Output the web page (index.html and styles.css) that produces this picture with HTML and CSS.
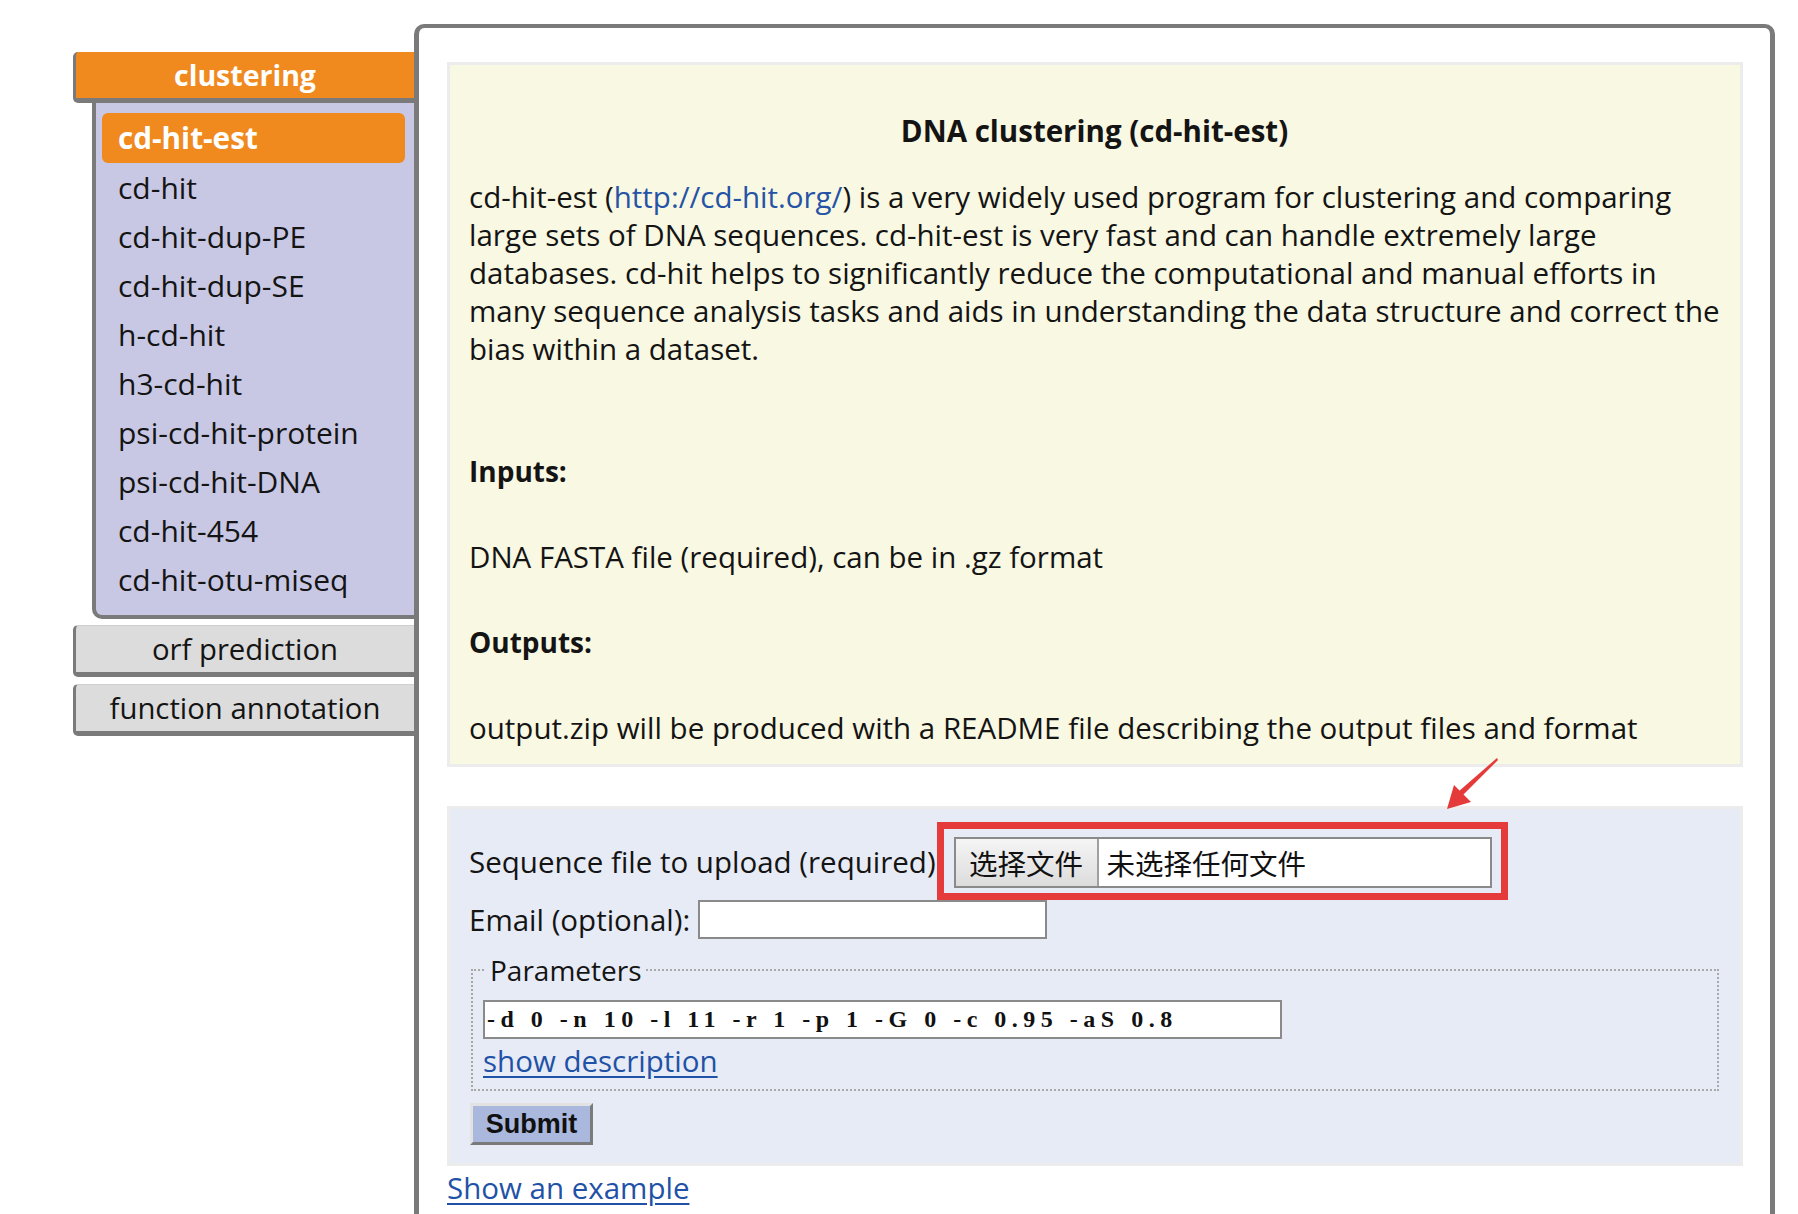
FILE: index.html
```html
<!DOCTYPE html>
<html lang="en">
<head>
<meta charset="utf-8">
<title>CD-HIT Suite: cd-hit-est</title>
<link rel="stylesheet" href="styles.css">
</head>
<body>
<div class="page">
  <nav class="sidebar">
    <div class="cat cat-active">clustering</div>
    <ul class="sub">
      <li class="sel">cd-hit-est</li>
      <li>cd-hit</li>
      <li>cd-hit-dup-PE</li>
      <li>cd-hit-dup-SE</li>
      <li>h-cd-hit</li>
      <li>h3-cd-hit</li>
      <li>psi-cd-hit-protein</li>
      <li>psi-cd-hit-DNA</li>
      <li>cd-hit-454</li>
      <li>cd-hit-otu-miseq</li>
    </ul>
    <div class="cat cat-gap1">orf prediction</div>
    <div class="cat cat-gap2">function annotation</div>
  </nav>

  <main class="panel">
    <section class="info">
      <h2 class="title">DNA clustering (cd-hit-est)</h2>
      <p class="desc">cd-hit-est (<a class="plain-link" href="#">http://cd-hit.org/</a>) is a very widely used program for clustering and comparing<br>large sets of DNA sequences. cd-hit-est is very fast and can handle extremely large<br>databases. cd-hit helps to significantly reduce the computational and manual efforts in<br>many sequence analysis tasks and aids in understanding the data structure and correct the<br>bias within a dataset.</p>
      <h4 class="sect sect-first">Inputs:</h4>
      <p class="sect-text">DNA FASTA file (required), can be in .gz format</p>
      <h4 class="sect">Outputs:</h4>
      <p class="sect-text">output.zip will be produced with a README file describing the output files and format</p>
    </section>

    <form class="form">
      <div class="row row-file">
        <span class="label">Sequence file to upload (required)</span>
        <span class="highlight">
          <span class="file">
            <span class="file-btn">选择文件</span>
            <span class="file-name">未选择任何文件</span>
          </span>
        </span>
      </div>
      <div class="row row-email">
        <span class="label">Email (optional):</span>
        <input class="text-input email" type="text">
      </div>
      <fieldset class="params">
        <legend class="params-legend">Parameters</legend>
        <input class="text-input params-input" type="text" value="-d 0 -n 10 -l 11 -r 1 -p 1 -G 0 -c 0.95 -aS 0.8">
        <a class="link desc-link" href="#">show description</a>
      </fieldset>
      <button class="submit" type="button">Submit</button>
    </form>
    <a class="link example-link" href="#">Show an example</a>
  </main>

  <svg class="arrow" width="64" height="64" viewBox="0 0 64 64">
    <polygon points="57,6 58,8 22,44 18,40" fill="#e53a3a"/>
    <polygon points="7,57 14,33 31,50" fill="#e53a3a"/>
  </svg>
</div>
</body>
</html>
```

FILE: styles.css
```css
html, body {
  margin: 0;
  padding: 0;
  background: #ffffff;
}

body {
  font-family: "Open Sans", "Noto Sans", sans-serif;
  font-size: 29.5px;
  color: #141414;
  overflow: hidden;
}

.page {
  position: relative;
  display: flex;
  align-items: flex-start;
  padding: 24px 0 0 73px;
}

/* ---------- sidebar ---------- */
.sidebar {
  flex: none;
  width: 341px;
  margin-top: 28px;
}

.cat {
  height: 46px;
  line-height: 46px;
  text-align: center;
  background: #dcdcdc;
  border-left: 3px solid #7a7a7a;
  border-bottom: 5px solid #7a7a7a;
  border-top: 1px solid #cfcfcf;
  border-radius: 5px 0 0 5px;
  color: #141414;
  font-size: 29.3px;
  white-space: nowrap;
}

.cat-active {
  background: #f0891e;
  color: #ffffff;
  font-weight: 700;
  font-size: 28.5px;
  border-top: none;
}

.cat-gap1 { margin-top: 6px; }
.cat-gap2 { margin-top: 7px; }

.sub {
  list-style: none;
  margin: 0 0 0 19px;
  padding: 10px 9px 11px 6px;
  background: #c8c8e4;
  border-left: 4px solid #7a7a7a;
  border-bottom: 4px solid #7a7a7a;
  border-bottom-left-radius: 10px;
}

.sub li {
  height: 49px;
  line-height: 49px;
  padding-left: 16px;
  font-size: 30px;
  white-space: nowrap;
}

.sub li.sel {
  height: 50px;
  line-height: 50px;
  background: #f0891e;
  color: #ffffff;
  font-weight: 700;
  font-size: 29.7px;
  border-radius: 6px;
}

/* ---------- main panel ---------- */
.panel {
  flex: none;
  box-sizing: border-box;
  width: 1361px;
  height: 1190px;
  padding: 34px 27px 0 28px;
  border: 5px solid #7a7a7a;
  border-top-width: 4px;
  border-bottom: none;
  border-radius: 10px 10px 0 0;
}

.info {
  background: #f9f8e3;
  border: 3px solid #ececec;
  padding: 47px 20px 17px 19px;
}

.title {
  margin: 0 0 28px;
  font-size: 29.5px;
  line-height: 38px;
  font-weight: 700;
  text-align: center;
}

.desc,
.sect-text {
  margin: 0;
  line-height: 38px;
  white-space: nowrap;
}

.sect {
  margin: 47px 0 0;
  font-size: 28px;
  line-height: 38px;
  font-weight: 700;
}

.sect-first { margin-top: 84px; }

.sect-text { margin-top: 48px; }

.plain-link {
  color: #2553a6;
  text-decoration: none;
}

/* ---------- form ---------- */
.form {
  margin-top: 39px;
  background: #e7ebf5;
  border: 3px solid #ececec;
  padding: 13px 0 18px 19px;
}

.row {
  display: flex;
  align-items: center;
}

.label {
  white-space: nowrap;
}

.highlight {
  display: inline-flex;
  margin-left: 1px;
  padding: 8px 9px 5px 10px;
  border: 7px solid #e63b3b;
}

.file {
  display: flex;
  box-sizing: border-box;
  width: 538px;
  height: 51px;
  border: 2px solid #8a8a8a;
  background: #ffffff;
  font-family: "Noto Sans CJK SC", "Noto Sans", sans-serif;
  font-size: 28.5px;
}

.file-btn {
  display: flex;
  align-items: center;
  justify-content: center;
  width: 141px;
  background: linear-gradient(#f5f5f5, #dcdcdc);
  border-right: 2px solid #a0a0a0;
  color: #111;
}

.file-name {
  display: flex;
  align-items: center;
  padding-left: 8px;
  color: #111;
}

.row-email {
  height: 39px;
}

.text-input {
  box-sizing: border-box;
  border: 2px solid #8a8a8a;
  background: #ffffff;
  margin: 0;
  padding: 0 0 0 2px;
  outline: none;
}

.email {
  width: 349px;
  height: 39px;
  margin-left: 8px;
}

.params {
  margin: 12px 21px 0 2px;
  padding: 11px 10px 8px;
  border: 2px dotted #a8a8a8;
}

.params-legend {
  margin-left: 3px;
  padding: 0 4px;
  font-size: 28px;
  line-height: 38px;
}

.params-input {
  display: block;
  width: 799px;
  height: 39px;
  font-family: "Liberation Serif", "DejaVu Serif", serif;
  font-weight: 700;
  font-size: 24px;
  letter-spacing: 5.5px;
  color: #111;
}

.link {
  color: #1f52a6;
  text-decoration: underline;
  text-underline-offset: 4px;
}

.desc-link {
  display: inline-block;
  margin-top: 3px;
  line-height: 38px;
}

.submit {
  display: block;
  box-sizing: border-box;
  width: 123px;
  height: 42px;
  margin: 12px 0 0 1px;
  padding: 0;
  background: #a9b8dc;
  border: 3px solid;
  border-color: #e2e2e2 #7a7a7a #7a7a7a #e2e2e2;
  font-family: "Liberation Sans", sans-serif;
  font-weight: 700;
  font-size: 27px;
  color: #111;
}

.example-link {
  display: inline-block;
  margin-top: 3px;
  line-height: 38px;
}

/* ---------- annotation arrow ---------- */
.arrow {
  position: absolute;
  left: 1440px;
  top: 752px;
}
```
